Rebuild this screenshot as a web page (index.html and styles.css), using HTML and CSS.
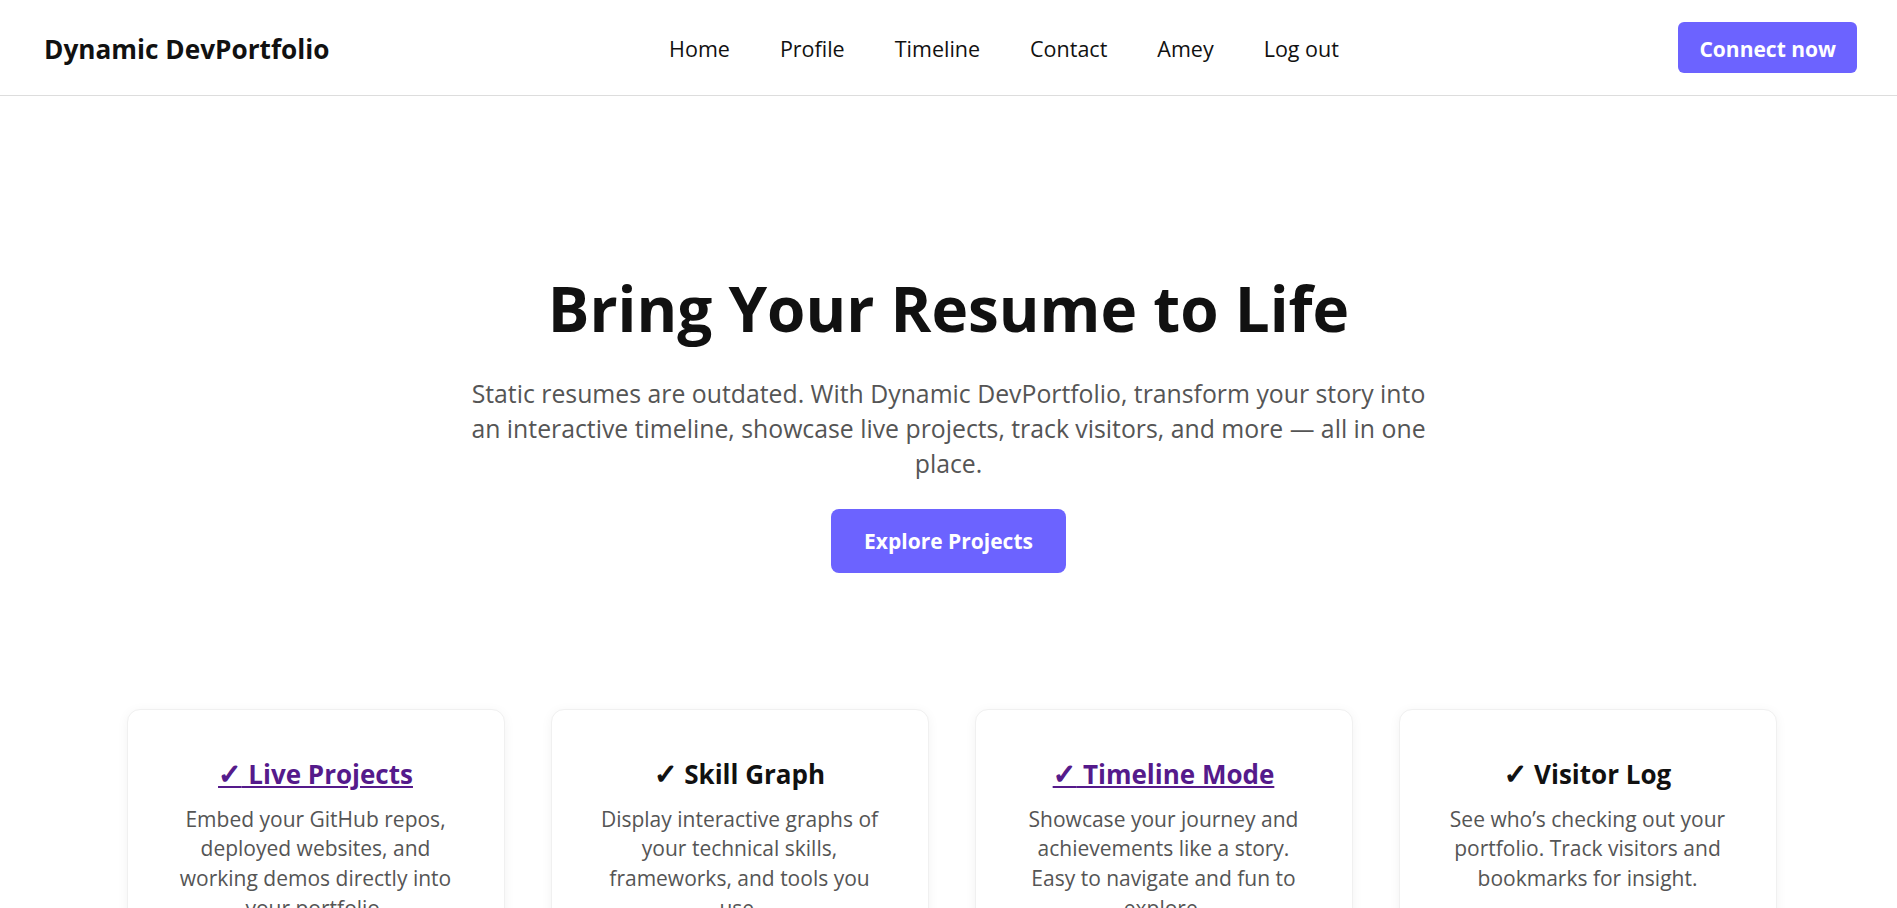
FILE: index.html
```html
<!DOCTYPE html>
<html lang="en">
<head>
<meta charset="utf-8">
<title>Dynamic DevPortfolio</title>
<link rel="stylesheet" href="styles.css">
</head>
<body>
<header class="topbar">
  <div class="logo">Dynamic DevPortfolio</div>
  <nav class="nav">
    <a href="#">Home</a>
    <a href="#">Profile</a>
    <a href="#">Timeline</a>
    <a href="#">Contact</a>
    <a href="#">Amey</a>
    <a href="#">Log out</a>
  </nav>
  <a class="btn btn-connect" href="#">Connect now</a>
</header>

<main>
  <section class="hero">
    <h1 class="hero-title">Bring Your Resume to Life</h1>
    <p class="hero-text">Static resumes are outdated. With Dynamic DevPortfolio, transform your story into an interactive timeline, showcase live projects, track visitors, and more — all in one place.</p>
    <a class="btn btn-explore" href="#">Explore Projects</a>
  </section>

  <section class="features">
    <div class="card">
      <h3 class="card-title"><a class="visited" href="#"><span class="check">✓</span> Live Projects</a></h3>
      <p class="card-text">Embed your GitHub repos, deployed websites, and working demos directly into your portfolio.</p>
    </div>
    <div class="card">
      <h3 class="card-title"><span class="check">✓</span> Skill Graph</h3>
      <p class="card-text">Display interactive graphs of your technical skills, frameworks, and tools you use.</p>
    </div>
    <div class="card">
      <h3 class="card-title"><a class="visited" href="#"><span class="check">✓</span> Timeline Mode</a></h3>
      <p class="card-text">Showcase your journey and achievements like a story. Easy to navigate and fun to explore.</p>
    </div>
    <div class="card">
      <h3 class="card-title"><span class="check">✓</span> Visitor Log</h3>
      <p class="card-text">See who’s checking out your portfolio. Track visitors and bookmarks for insight.</p>
    </div>
  </section>
</main>
</body>
</html>
```

FILE: styles.css
```css
* { box-sizing: border-box; }

body {
  margin: 0;
  font-family: "Open Sans", "Noto Sans", "DejaVu Sans", sans-serif;
  color: #111;
  background: #fff;
}

.topbar {
  display: flex;
  justify-content: space-between;
  align-items: center;
  height: 96px;
  padding: 0 40px 0 44px;
  border-bottom: 1px solid #dddddd;
}

.logo {
  padding-top: 2px;
  font-size: 26.2px;
  font-weight: 700;
  color: #111;
}

.nav {
  display: flex;
  gap: 50px;
  padding-top: 2px;
}

.nav a {
  font-size: 21.5px;
  font-weight: 500;
  color: #111;
  text-decoration: none;
}

.btn {
  display: inline-block;
  background: #6c63ff;
  color: #fff;
  font-weight: 700;
  text-decoration: none;
  border-radius: 6px;
}

.btn-connect {
  font-size: 21px;
  line-height: 27px;
  padding: 14px 21px 10px;
}

.hero {
  display: flex;
  flex-direction: column;
  align-items: center;
  text-align: center;
  padding-top: 175px;
}

.hero-title {
  margin: 0;
  font-size: 62px;
  line-height: 1.2;
  font-weight: 700;
  color: #111;
}

.hero-text {
  max-width: 975px;
  margin: 31px 0 0;
  font-size: 24.8px;
  line-height: 35px;
  color: #555;
}

.btn-explore {
  margin-top: 28px;
  font-size: 21px;
  line-height: 29px;
  padding: 18px 33px 17px;
  border-radius: 8px;
}

.features {
  display: grid;
  grid-template-columns: repeat(4, 378px);
  gap: 46px;
  justify-content: center;
  margin-top: 136px;
  padding-left: 6px;
}

.card {
  background: #fff;
  border: 1px solid #f0f0f0;
  border-radius: 13px;
  box-shadow: 0 2px 12px rgba(0, 0, 0, 0.05);
  padding: 47px 38px 40px;
  text-align: center;
}

.card-title {
  margin: 0;
  font-size: 26px;
  line-height: 34px;
  font-weight: 700;
  color: #111;
}

.card-title .visited {
  color: #551a8b;
  text-decoration: underline;
}

.check {
  font-family: "DejaVu Sans", sans-serif;
  font-weight: 700;
  font-size: 1.08em;
  -webkit-text-stroke: 1.3px currentColor;
}

.card-text {
  margin: 12.5px 0 0;
  font-size: 21px;
  line-height: 29.6px;
  color: #555;
}
```
